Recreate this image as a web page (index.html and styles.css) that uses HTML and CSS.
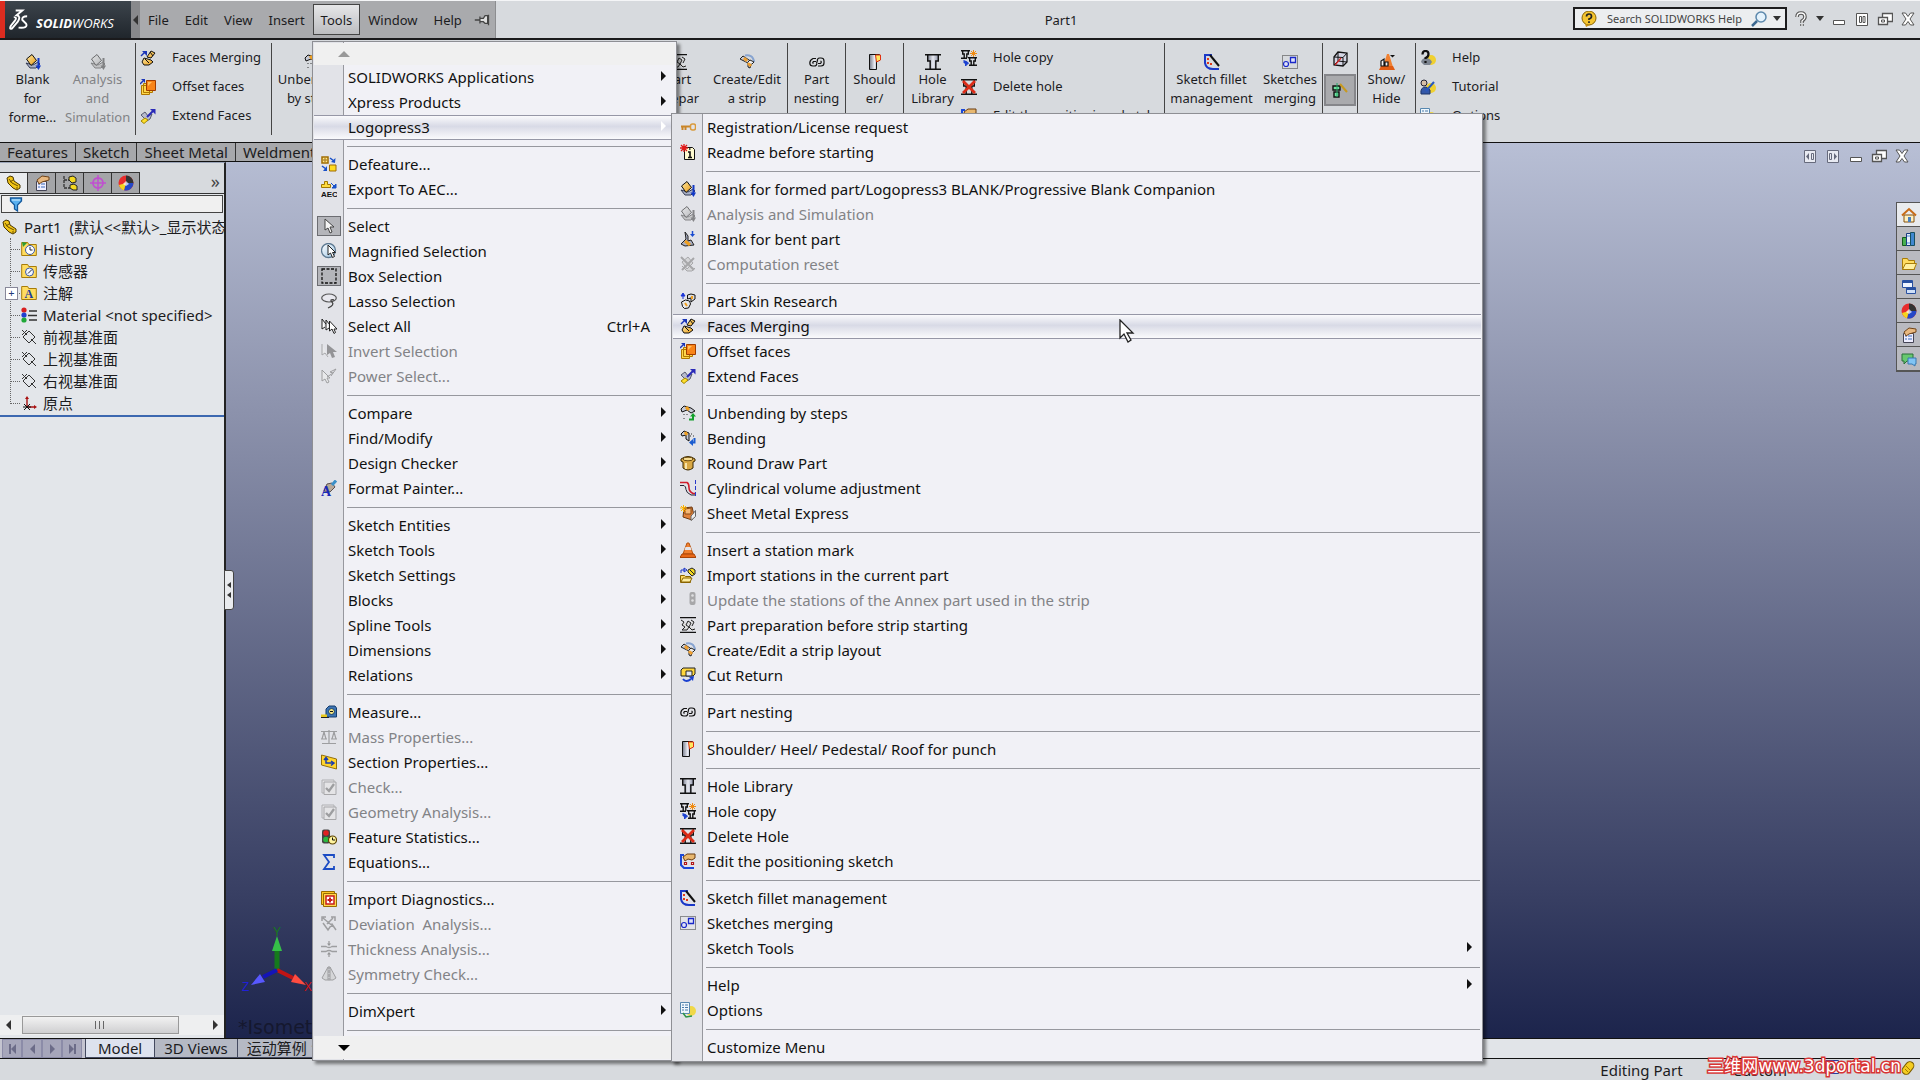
FILE: index.html
```html
<!DOCTYPE html>
<html lang="en">
<head>
<meta charset="utf-8">
<title>SOLIDWORKS - Part1</title>
<link rel="stylesheet" href="styles.css">
</head>
<body>
<svg class="paints" aria-hidden="true">
  <defs>
    <linearGradient id="g-steel" x1="0" x2="1"><stop offset="0" stop-color="#777c8c"/><stop offset=".5" stop-color="#e8eaf2"/><stop offset="1" stop-color="#8a90a4"/></linearGradient>
    <linearGradient id="g-gold" x1="0" x2="1" y2="1"><stop offset="0" stop-color="#ffe9a0"/><stop offset="1" stop-color="#e89a18"/></linearGradient>
    <linearGradient id="g-lens" x1="0" x2="1" y2="1"><stop offset="0" stop-color="#ffffff"/><stop offset="1" stop-color="#9cc4e4"/></linearGradient>
  </defs>
</svg>
<svg class="sprite" aria-hidden="true">
  <symbol id="i-blank" viewBox="0 0 16 16"><path d="M1 9 5 14h6l4-4-2-2-5 3z" fill="#a9b1c8" stroke="#333a55"/><path d="M1.500 5 7 .5l4.500 6-5.500 5z" fill="url(#g-gold)" stroke="#111"/><path d="M13.500 4v9" stroke="#1238c4" stroke-width="2"/><path d="M10.500 11.500H16L13.500 16z" fill="#1238c4"/></symbol>
  <symbol id="i-merge" viewBox="0 0 16 16"><path d="M7 7 11 1l4 2-4 5z" fill="url(#g-gold)" stroke="#111"/><path d="m2 12 2-4 7 2 2 2-4 3-5 0z" fill="url(#g-gold)" stroke="#111"/><path d="m5 9 4 4M10 2l3 4" stroke="#111"/><path d="M1 6 5 2" stroke="#1a35b8" stroke-width="1.500"/><path d="M2 1h5v5z" fill="#1a35b8"/></symbol>
  <symbol id="i-offset" viewBox="0 0 16 16"><path d="M1.500 6.500h8v9h-8zM3.500 4.500h9v9h-9z" fill="#ffd84c" stroke="#b07800"/><path d="M6.500 1.500h9v10h-9z" fill="#f88418" stroke="#a03c00"/><path d="M8 3h4l-4 4z" fill="#ffc060"/><path d="M0 5 3 2" stroke="#1a35b8" stroke-width="1.500"/><path d="M1 0h4v4z" fill="#1a35b8"/></symbol>
  <symbol id="i-extend" viewBox="0 0 16 16"><path d="m1 7 4-3 3 4 4-2-2 5-3 2z" fill="#b8bccc" stroke="#555a70"/><path d="m1 13 4-3 3 2-4 3.500z" fill="#ffe02c" stroke="#a08400"/><path d="M7 9 13 3" stroke="#2a2ab8" stroke-width="2"/><path d="M10 1h5.500v5.500z" fill="#2a2ab8"/></symbol>
  <symbol id="i-key" viewBox="0 0 16 16"><path d="M1 7.500h9M2.500 8v3M5.500 8v3" stroke="#c98528" stroke-width="2" fill="none"/><rect x="10.500" y="5" width="5" height="6" rx="2" fill="none" stroke="#d99a3c" stroke-width="1.500"/></symbol>
  <symbol id="i-readme" viewBox="0 0 16 16"><path d="M4.500 3.500h8l2 2v10h-10z" fill="#fffbd0" stroke="#111"/><path d="M8 8h2v5M8 13.500h4M9 5h1.500" stroke="#111" stroke-width="1.600" fill="none"/><path d="M0 4h8M4 0v8M1 1l6 6M7 1 1 7" stroke="#e01818" stroke-width="1.300"/></symbol>
  <symbol id="i-bent" viewBox="0 0 16 16"><path d="m5 1 1 7-5 5 4 2 9-1-3-5-3 1V5z" fill="#a8aec4" stroke="#222"/><path d="m5 10 5 4" stroke="#f0a020" stroke-width="3"/><path d="M12.500 0v4" stroke="#1a4bd0" stroke-width="1.500"/><path d="M10 3h5l-2.500 3z" fill="#1a4bd0"/></symbol>
  <symbol id="i-reset" viewBox="0 0 16 16"><path d="m2 6 6-5 5 6-6 6zM2 10l5 5h5l3-3" fill="#ccc" stroke="#777"/><path d="m1 1 13 13M14 2 2 14" stroke="#777" stroke-width="2"/></symbol>
  <symbol id="i-skin" viewBox="0 0 16 16"><path d="M7.500 2 11 1l4 1v4l-4 3V5l-3.500 1z" fill="#ddd" stroke="#111"/><path d="m1.500 9 4-2 4 1 1 3-2 4-4 .5-2-2z" fill="#e8e8e8" stroke="#111"/><path d="m5 10 2 3M12 3v3" stroke="#f0a020" stroke-width="2"/><path d="M3 6V2M1 3h4L3 0z" stroke="#1a35d8" fill="#1a35d8"/></symbol>
  <symbol id="i-unbend" viewBox="0 0 16 16"><path d="m1 4 3-3 7 2 4 3-4 2-4-3-5 2z" fill="#c4c8d4" stroke="#111"/><path d="m6 2 3 3" stroke="#f0a020" stroke-width="3"/><path d="M4 9v1m3-1v1m-3 3v1" stroke="#333"/><path d="M9 14.500h4V11" stroke="#12a02c" stroke-width="2" fill="none"/><path d="M10 11.500h6L13 8z" fill="#12a02c"/></symbol>
  <symbol id="i-bend" viewBox="0 0 16 16"><path d="m1 4 3-3 5 2v8l-3-2V5L2 6z" fill="#c4c8d4" stroke="#111"/><path d="m5 2 2 3" stroke="#f0a020" stroke-width="3"/><path d="M11 4h1m1 2h1m-4 0h1" stroke="#333"/><path d="M14.500 8v4.500H12" stroke="#1a5cd0" stroke-width="2" fill="none"/><path d="M13 9v7l-4-3.500z" fill="#1a5cd0"/></symbol>
  <symbol id="i-round" viewBox="0 0 16 16"><path d="M1 4q7-5 14 0v2l-2 1v6q-5 4-10 0V7L1 6z" fill="#d9a844" stroke="#3a2800"/><ellipse cx="8" cy="4" rx="5" ry="1.800" fill="#f6dc90" stroke="#6b4c10"/><path d="M6 8v6" stroke="#f8e4a8" stroke-width="2"/></symbol>
  <symbol id="i-cyl" viewBox="0 0 16 16"><path d="M0 2.500h7q2 1 2 5t4 6h2" fill="none" stroke="#d01c2c" stroke-width="1.600"/><path d="M0 5.500h4q2 1 2 4t5 5.500h4" fill="none" stroke="#223"/><path d="M15.500 0v16" stroke="#2838c8" stroke-dasharray="4 2"/></symbol>
  <symbol id="i-sme" viewBox="0 0 16 16"><path d="m4 3 8-1 2 8-2 5-9-3z" fill="#e0823c" stroke="#6c3810"/><path d="m5 4 6-1v6H5z" fill="#f4b878" stroke="#8a4a14"/><path d="M11 11v4.500l4.500-4V5.500l-3 4z" fill="#eee" stroke="#666"/><path d="M0 3h7M3.500 0v7M1 1l5 5M6 1 1 6" stroke="#ffb400"/></symbol>
  <symbol id="i-cone" viewBox="0 0 16 16"><path d="M7 1h2l4 11H3z" fill="#f08030" stroke="#b85410"/><path d="m5.500 5-1 3h7l-1-3z" fill="#e4e4e8"/><path d="M0 15.500 2 12h12l2 3.500z" fill="#e86818" stroke="#a84408"/></symbol>
  <symbol id="i-import" viewBox="0 0 16 16"><path d="M.5 15.500v-7h4l1 1h5v6z" fill="#ffd860" stroke="#8a6400"/><path d="m1 15 2-4h9l-2 4z" fill="#ffeea0" stroke="#8a6400"/><path d="m8 3 4-2 3 2v4l-3 2-4-4z" fill="#f4d820" stroke="#222"/><path d="m10 3 4 4" stroke="#222"/><path d="M1 6V3h4M4 1l3 2-3 2z" stroke="#1a35c8" fill="none"/></symbol>
  <symbol id="i-update" viewBox="0 0 16 16"><rect x="9.500" y="0" width="6" height="13" rx="2" fill="#777"/><circle cx="12.500" cy="3.500" r="1.300" fill="#ddd"/><circle cx="12.500" cy="8.500" r="1.300" fill="#ddd"/></symbol>
  <symbol id="i-prep" viewBox="0 0 16 16"><path d="M0 .5h16M0 15.500h16" stroke="#111" stroke-width="1.500"/><path d="m1 3 3 2-2 3 3 2-3 3h5l2-3-3-2 2-4 3 2-2 4 3 3 3-1M11 3l3 2-2 4" fill="#ddd" stroke="#222"/></symbol>
  <symbol id="i-strip" viewBox="0 0 16 16"><path d="m1 5 3-3 6 4 3 2-2 6-2-1V9L7 8 5 7z" fill="#c8ccd8" stroke="#222"/><path d="m5 4 3 3M9 9l3 3" stroke="#f0a030" stroke-width="3"/><path d="M6 1.500q6-1 8 3l1.500 3.500" fill="none" stroke="#88a4d0" stroke-width="2"/><path d="m9 8 2-2 4 2-2 2" fill="#eee" stroke="#222"/></symbol>
  <symbol id="i-cut" viewBox="0 0 16 16"><path d="m1 3 2-2h12v6l-2 2H1z" fill="#ffd63c" stroke="#222"/><path d="M6 4h6v5H6z" fill="#e4e8f0" stroke="#222"/><path d="M3 12q3 4 8 0" fill="none" stroke="#1a40d0" stroke-width="2"/><path d="m9 10 5-1-1 5z" fill="#1a40d0"/></symbol>
  <symbol id="i-nest" viewBox="0 0 16 16"><path d="M7 4.500H4Q.8 6 .8 9t3 3h1.500q2.500 0 2.500-2.500" fill="none" stroke="#111" stroke-width="1.200"/><path d="M7 7.500H4.500Q3 9 4.500 9.500M9 12h3q3 0 3-3V7q0-3-3-3h-1.500Q8.300 4 8.300 7L7.500 9.500M9 9.500h2.500Q13 7.500 11.500 7" fill="none" stroke="#111" stroke-width="1.200"/></symbol>
  <symbol id="i-shoulder" viewBox="0 0 16 16"><path d="M2.500.5h10v5l-3 2v8h-7z" fill="url(#g-steel)" stroke="#111"/><path d="M8.500 1h5v5l-4 2z" fill="#ffe860" stroke="#e03010"/></symbol>
  <symbol id="i-hole" viewBox="0 0 16 16"><path d="M2.500 1h11v6h-2v8h-7V7h-2z" fill="url(#g-steel)"/><path d="M0 .7h16M0 15.300h16M2.700 1v6h2.500v8M13.300 1v6h-2.500v8" fill="none" stroke="#111" stroke-width="1.400"/></symbol>
  <symbol id="i-holecopy" viewBox="0 0 16 16"><path d="M0 .7h9M0 8.300h6M1.700 1v3h1.500v4M7.300 1v3H5.800v4" fill="none" stroke="#111" stroke-width="1.400"/><path d="M7 7.700h9M8 15.300h8M8.700 8v3h1.500v4M14.300 8v3h-1.500v4" fill="none" stroke="#111" stroke-width="1.400"/><path d="M9 3.500h7M12.500 0v7M10 1l5 5m0-5-5 5" stroke="#f08a10"/><path d="M3 10v3h2M4.500 11l3 2-3 3z" stroke="#1a40d0" fill="#1a40d0"/></symbol>
  <symbol id="i-holedel" viewBox="0 0 16 16"><path d="M0 .7h16M0 15.300h16M2.700 1v6h2.500v8M13.300 1v6h-2.500v8" fill="none" stroke="#111" stroke-width="1.400"/><path d="M2 2 14 14M14 2 2 14" stroke="#dc2c18" stroke-width="2.800"/></symbol>
  <symbol id="i-editsk" viewBox="0 0 16 16"><path d="M4 2H1v10l3 3h10" fill="none" stroke="#1a48d8" stroke-width="2"/><path d="m3 4 4-3h8v4l-3 2-4-1-3 2z" fill="#e8b870" stroke="#6b3c10"/><path d="M4.500 9.500h2v2h-2zm7 0h2v2h-2z" fill="#fff" stroke="#b01818" stroke-width="1.200"/></symbol>
  <symbol id="i-fillet" viewBox="0 0 16 16"><path d="M8 1H1v8q1 6 8 6h6" fill="none" stroke="#1a38c8" stroke-width="2"/><path d="m6 1 9 11" stroke="#111" stroke-width="2"/><path d="M3 5h2M3 9h2M6 10h2" stroke="#e03818" stroke-width="2"/></symbol>
  <symbol id="i-skmerge" viewBox="0 0 16 16"><path d="M.5 1.500h15v13H.5z" fill="none" stroke="#333" stroke-dasharray="1 1"/><path d="M8.500 3.500h5v5h-5z" fill="#dfe2f8" stroke="#1a28c8" stroke-width="1.300"/><circle cx="4" cy="10" r="2.500" fill="#dfe2f8" stroke="#1a28c8" stroke-width="1.200"/></symbol>
  <symbol id="i-options" viewBox="0 0 16 16"><circle cx="11" cy="9" r="5" fill="#f0d848"/><path d="M.5.5h9v11h-9z" fill="#eef6fc" stroke="#5888b0"/><path d="M2 3h2m1 0h3M2 5.500h2m1 0h3M2 8h2m1 0h3" stroke="#4878a8"/><path d="m3 11 3 4 6-1" fill="none" stroke="#2c9444" stroke-width="1.500"/></symbol>
  <symbol id="i-defeature" viewBox="0 0 16 16"><path d="M1 1h6v6H1z" fill="#ffe890" stroke="#a06c00" stroke-width="1.500"/><path d="M3 3h2v2H3z" fill="#fff" stroke="#a06c00"/><path d="M8.500 9h6.500v6H8.500z" fill="#ffdc20" stroke="#a06c00"/><path d="m9 2 4 3M1 10l4 3" stroke="#1850c8" stroke-width="1.500"/><path d="m14.500 2-.5 5-4-1zM6 10v5H2z" fill="#1850c8"/></symbol>
  <symbol id="i-aec" viewBox="0 0 16 16"><path d="M.5 6.500v-3h3v-3h3v3h3v3z" fill="#ffdc40" stroke="#a07800"/><path d="m10 2 3 3M15 3v4h-4z" stroke="#1850c8" fill="#1850c8"/><text x="0" y="15.500" font-family="Liberation Sans, sans-serif" font-size="8" font-weight="bold" fill="#111">AEC</text></symbol>
  <symbol id="i-cursor" viewBox="0 0 16 16"><path d="M4 1v11l3-2 2 5 2-1-2-5h4z" fill="#f4f4f4" stroke="#444"/></symbol>
  <symbol id="i-magsel" viewBox="0 0 16 16"><circle cx="7.500" cy="7.500" r="7" fill="url(#g-lens)" stroke="#5c7890" stroke-width="1.300"/><path d="M7 2v10l2.500-2 2 4.500 2-1-2-4h3z" fill="#fff" stroke="#222"/></symbol>
  <symbol id="i-boxsel" viewBox="0 0 16 16"><path d="M1 1h14v14H1z" fill="none" stroke="#111" stroke-width="1.300" stroke-dasharray="3 1.500"/></symbol>
  <symbol id="i-lasso" viewBox="0 0 16 16"><ellipse cx="8" cy="5" rx="7.300" ry="4" fill="#e8e8ee" stroke="#555" stroke-width="1.200"/><path d="M13 7q-5-1-2 2t-4 6" fill="none" stroke="#444" stroke-width="1.300"/></symbol>
  <symbol id="i-selall" viewBox="0 0 16 16"><path d="M1 1v10l3-2M5 2v10l3-2" fill="#fff" stroke="#222"/><path d="M1 1l4 5m0-4 4 5" stroke="#222"/><path d="M8.500 3v10l2.500-2 2 4.500 1.500-1L13 11h3z" fill="#fff" stroke="#222"/></symbol>
  <symbol id="i-invert" viewBox="0 0 16 16"><path d="M1 1v11l3-2 3 4" fill="#eee" stroke="#777"/><path d="M6 1v11l3-2 2 5 3-1-2-5h4z" fill="#555"/></symbol>
  <symbol id="i-power" viewBox="0 0 16 16"><path d="M1 2v11l3-2 2 4 2-1-2-4h3z" fill="#eee" stroke="#666"/><path d="M10 8 15 1 9 4l3 1-6 4" fill="none" stroke="#666"/></symbol>
  <symbol id="i-painter" viewBox="0 0 16 16"><path d="m6 4 5-1 3 4-5 5-6-1z" fill="#b8a898" stroke="#5a5050"/><path d="m11 5 4-4.500" stroke="#3a90c8" stroke-width="3"/><text x="0" y="16" font-family="Liberation Serif, serif" font-size="14" font-weight="bold" fill="#1a28b8">A</text></symbol>
  <symbol id="i-measure" viewBox="0 0 16 16"><path d="M5 13V5l3-3h6l1.500 2v9z" fill="#3c74b4" stroke="#143c6c"/><circle cx="10.500" cy="7.500" r="3" fill="#f4e480" stroke="#143c6c"/><path d="M9 7.500h3" stroke="#111"/><path d="M0 12h6" stroke="#e8c81c" stroke-width="3"/><path d="M0 13.500h8" stroke="#222"/></symbol>
  <symbol id="i-mass" viewBox="0 0 16 16"><path d="M0 2.500h16M8 1v13M1 14.500h14M0 10h6M10 10h6M3 3l-2 7M3 3l2 7M13 3l-2 7m2-7 2 7" stroke="#666" stroke-width="1.200" fill="none"/></symbol>
  <symbol id="i-section" viewBox="0 0 16 16"><path d="m.5 1 15 4v10L.5 11z" fill="#ffd42c" stroke="#94700c"/><path d="M5 4v5h7M3 6l2-2.500L7 6M10 7l3 2-3 2.500" fill="none" stroke="#1a3cb0" stroke-width="1.500"/></symbol>
  <symbol id="i-check" viewBox="0 0 16 16"><path d="M1 1h12v13H1z" fill="#e6e6ea" stroke="#888"/><path d="M3 3h12v12.500H3z" fill="#e6e6ea" stroke="#777"/><path d="m5 9 3 3 5-7" fill="none" stroke="#666" stroke-width="2.300"/></symbol>
  <symbol id="i-stats" viewBox="0 0 16 16"><rect x="1" y=".5" width="8" height="14" rx="2" fill="#444"/><circle cx="5" cy="4" r="2.800" fill="#e02020"/><circle cx="5" cy="10.500" r="2.800" fill="#2cb840"/><circle cx="11.500" cy="11" r="4" fill="#fff4a0" stroke="#5c4400" stroke-width="1.200"/><path d="M11.500 8.500V11H14" fill="none" stroke="#111"/></symbol>
  <symbol id="i-sigma" viewBox="0 0 16 16"><path d="M13 4V1H3l5 7-5 7h10v-3" fill="none" stroke="#1c4cc4" stroke-width="1.800"/></symbol>
  <symbol id="i-diag" viewBox="0 0 16 16"><path d="M.5.500h13v13H.5z" fill="#ffc824" stroke="#986c00"/><path d="M2.500 2.500h13v13h-13z" fill="#ffd84c" stroke="#986c00"/><path d="M5 5h8v8H5z" fill="#fff" stroke="#c81c1c" stroke-width="1.500"/><path d="M9 6.500v5M6.500 9h5" stroke="#c81c1c" stroke-width="2"/></symbol>
  <symbol id="i-dev" viewBox="0 0 16 16"><path d="m2 2 12 10M12 2 6 8M1 5V1h4M10 1h4v4M2 7l5 7 4-6 4 6" fill="none" stroke="#666" stroke-width="1.500"/></symbol>
  <symbol id="i-thick" viewBox="0 0 16 16"><path d="M0 5.500h5q3 2 6 0h5M0 10.500h5q3-2 6 0h5M8 0v4M8 16v-4" fill="none" stroke="#666" stroke-width="1.300"/><path d="M6 2.500h4L8 5zM6 13.500h4L8 11z" fill="#555"/></symbol>
  <symbol id="i-sym" viewBox="0 0 16 16"><path d="M7 1 1 12l3 2h3zM9 1l6 11-3 2H9z" fill="#ccc" stroke="#666"/><path d="M8 0v16" stroke="#555" stroke-dasharray="3 1"/></symbol>
  <symbol id="i-help" viewBox="0 0 16 16"><circle cx="11" cy="10" r="5" fill="#f0d030"/><path d="M1 12q1-4 5-4t6 4l-2 3H4z" fill="#7c8490"/><path d="M2.500 4.500q0-3.500 3-3.500t3 3-3 4v1M5.500 11v2" fill="none" stroke="#111" stroke-width="2.200"/></symbol>
  <symbol id="i-tutorial" viewBox="0 0 16 16"><circle cx="11" cy="9" r="5" fill="#f0d030"/><circle cx="4" cy="4" r="3" fill="#d8c0a8" stroke="#223"/><path d="M1 15q-1-7 5-7l4 3v4z" fill="#3458a8" stroke="#1c3468"/><path d="M6 12 14 3" stroke="#2858c0" stroke-width="2"/></symbol>
  <symbol id="i-cube" viewBox="0 0 16 16"><path d="m2 6 4-5 9 1v9l-4 4-9-1z" fill="#d4d6e4" stroke="#111" stroke-width="1.300"/><path d="m2 6 9 .5V15m0-8.500L15 2M6 1v9l-4 4m4-4 9 1" fill="none" stroke="#111"/><path d="M3 14 9 7" stroke="#d02828" stroke-width="1.300"/></symbol>
  <symbol id="i-wand" viewBox="0 0 16 16"><path d="M1 4h7v4H1zM2 10h5v5H2z" fill="#70e0a0" stroke="#111" stroke-width="1.400"/><path d="M5 1v14" stroke="#28a868"/><path d="m8 2 7 8" stroke="#c89a20" stroke-width="2"/></symbol>
  <symbol id="i-show" viewBox="0 0 16 16"><path d="M8 0h2l4 13H4z" fill="#f08030"/><path d="M0 16 2 12h12l2 4z" fill="#e05c14"/><path d="M2 12V7l3-2v7zM6 12V8h3v4z" fill="#f2f2f2" stroke="#111" stroke-width="1.200"/><path d="M11 1h5l-2.500 2.500z" fill="#111"/></symbol>
  <symbol id="i-part" viewBox="0 0 16 16"><path d="m1 3 3-2 3 1 1 4 6 4v3l-3 2-4-2-5-5z" fill="#f0c418" stroke="#4a3600"/><path d="m3 4 3 4 6 3M7 5 4 7M11 12v2" fill="none" stroke="#6b5000"/></symbol>
  <symbol id="i-prop" viewBox="0 0 16 16"><path d="M2.500 6.500h10v9h-10z" fill="#eef" stroke="#445"/><path d="M4 9h2m1 0h4M4 12h2m1 0h4" stroke="#3a68b8"/><path d="m3 5 5-4 7 1v3l-7 2-3 2z" fill="#e8b880" stroke="#704418"/></symbol>
  <symbol id="i-config" viewBox="0 0 16 16"><path d="M2 1v12h6M2 5h5" stroke="#333" stroke-width="1.300" fill="none" stroke-dasharray="3 1"/><path d="m7 2 4-1 3 2v4l-4 1-3-3zM8 10l4-1 3 2v4h-4l-3-2z" fill="#f4d820" stroke="#222"/></symbol>
  <symbol id="i-target" viewBox="0 0 16 16"><circle cx="8" cy="8" r="5" fill="none" stroke="#c050d0" stroke-width="1.800"/><path d="M8 0v16M0 8h16" stroke="#c050d0" stroke-width="1.500"/></symbol>
  <symbol id="i-ball" viewBox="0 0 16 16"><circle cx="8" cy="8" r="7.500" fill="#e82c2c"/><path d="M8 8V.5A7.500 7.500 0 0 1 15.500 8z" fill="#333"/><path d="M8 8h7.500A7.500 7.500 0 0 1 6 15.200z" fill="#2448c8"/><path d="M8 8 6 15.200A7.500 7.500 0 0 1 1 10z" fill="#f4d420"/><path d="m8 6 3 3-3 2-3-2z" fill="#fff" opacity=".7"/></symbol>
  <symbol id="i-filter" viewBox="0 0 16 16"><path d="M2.500 2h11v3l-4 4v6l-3-2V9l-4-4z" fill="#58b0f0" stroke="#14589c" stroke-width="1.300"/><path d="M4 4h8" stroke="#d8f0ff"/></symbol>
  <symbol id="i-folder" viewBox="0 0 16 16"><path d="M.7 14.500V1.500h6l1 2h7.600v11z" fill="#ffdc60" stroke="#a87c08"/></symbol>
  <symbol id="i-open" viewBox="0 0 16 16"><path d="M1.500 14.500v-11h5l1 2h6v9z" fill="#ffdc60" stroke="#a87c08"/><path d="m1.500 14.500 3-6h11l-2.500 6z" fill="#fff0a0" stroke="#a87c08"/></symbol>
  <symbol id="i-history" viewBox="0 0 16 16"><use href="#i-folder"/><path d="m1 1 5 1-4 4z" fill="#2c9c34"/><circle cx="9" cy="9" r="4.500" fill="#fff" stroke="#3a58a8"/><path d="M9 6v3h2.500" fill="none" stroke="#223"/></symbol>
  <symbol id="i-sensor" viewBox="0 0 16 16"><use href="#i-folder"/><circle cx="8.500" cy="9" r="4" fill="#f4f8ff" stroke="#3a58a8"/><path d="m7 10.500 4-4" stroke="#223"/></symbol>
  <symbol id="i-annot" viewBox="0 0 16 16"><use href="#i-folder"/><text x="3.500" y="13" font-family="Liberation Serif, serif" font-size="12" font-weight="bold" fill="#1c3c9c">A</text></symbol>
  <symbol id="i-material" viewBox="0 0 16 16"><circle cx="3" cy="3" r="2.600" fill="#d82020"/><circle cx="3" cy="8" r="2.600" fill="#2040d0"/><circle cx="3" cy="13" r="2.600" fill="#20a838"/><path d="M8 4h8M7 8.500h9M8 13h8" stroke="#333" stroke-width="1.500"/></symbol>
  <symbol id="i-plane" viewBox="0 0 16 16"><path d="m8 2 6 6-6 6-6-6zM1 1l5 5M10 10l5 5M1 6l5-5" fill="none" stroke="#333"/></symbol>
  <symbol id="i-origin" viewBox="0 0 16 16"><path d="M6 12V3M6 12h8" stroke="#a81010" stroke-width="1.400"/><path d="M4 4h4L6 1zM13 10v4l3-2z" fill="#a81010"/><path d="m3 9 6 6M9 9l-6 6M2 12h8" stroke="#111"/></symbol>
  <symbol id="i-home" viewBox="0 0 16 16"><path d="M3 8h10v7H3z" fill="#fff0c0" stroke="#84500c"/><path d="M1 8.500 8 2l7 6.500" fill="none" stroke="#c86c18" stroke-width="2"/><path d="M7 10h3v5H7z" fill="#4880c0"/></symbol>
  <symbol id="i-books" viewBox="0 0 16 16"><path d="M1.500 6.500h4v8h-4z" fill="#48b050" stroke="#145c1c"/><path d="M5.500 2.500h4v12h-4z" fill="#e8f0f8" stroke="#183c80"/><path d="M9.500 1.500h4v13h-4z" fill="#4088d0" stroke="#185060"/><path d="M6 5h3M6 12h3" stroke="#4c88dc"/></symbol>
  <symbol id="i-window" viewBox="0 0 16 16"><path d="M1.500 1.500h10v7h-10z" fill="#eef4ff" stroke="#2850a0"/><path d="M5.500 8.500h9v6h-9z" fill="#cfe0f8" stroke="#2850a0"/><path d="M2 3h9M6 10h8" stroke="#2850a0" stroke-width="2"/></symbol>
  <symbol id="i-chat" viewBox="0 0 16 16"><path d="M1 3h11v7H6l-3 3v-3H1z" fill="#68c870" stroke="#287038"/><path d="M7 7h8v6h-1v2l-3-2H7z" fill="#80c4f4" stroke="#3878b0"/></symbol>
  <symbol id="w-min" viewBox="0 0 16 16"><path d="M2.500 9.500h11v4h-11z" fill="#fff" stroke="#555"/></symbol>
  <symbol id="w-tile" viewBox="0 0 16 16"><path d="M2.500 2.500h11v12h-11zM5.500 5.500h2v6h-2zM9 5.500h2v6H9z" fill="#fff" stroke="#555"/></symbol>
  <symbol id="w-left" viewBox="0 0 16 16"><path d="M2.500 2.500h11v12h-11zM9.500 5.500h2v6h-2z" fill="#e8eaf2" stroke="#666a7c"/><path d="M7 5v7L4 8.500z" fill="#666a7c"/></symbol>
  <symbol id="w-right" viewBox="0 0 16 16"><path d="M2.500 2.500h11v12h-11zM4.500 5.500h2v6h-2z" fill="#e8eaf2" stroke="#666a7c"/><path d="M9 5v7l3-3.500z" fill="#666a7c"/></symbol>
  <symbol id="w-rest" viewBox="0 0 16 16"><path d="M5.500 2.500h10v8h-10z" fill="#fff" stroke="#555" stroke-width="1.300"/><path d="M1.500 6.500h9v7h-9z" fill="#fff" stroke="#555" stroke-width="1.300"/><path d="M4.500 9h3v2h-3z" fill="none" stroke="#555"/></symbol>
  <symbol id="w-close" viewBox="0 0 16 16"><path d="M2 2h3.500L8 5.500 10.500 2H14l-4 6 4 6h-3.500L8 10.500 5.500 14H2l4-6z" fill="#fff" stroke="#555"/></symbol>
</svg>

<header class="titlebar">
  <div class="brand">
    <svg class="brand-mark" viewBox="0 0 22 24"><path d="M7 2h7l-6 5q5 1 1 7l-6 7q-3 1-1-3l4-5q3-4-1-4M19 8q-6 0-5 4l4 4q2 5-8 4" fill="none" stroke="#fff" stroke-width="2"/></svg>
    <span class="brand-name"><b>SOLID</b>WORKS</span>
  </div>
  <button class="collapse" aria-label="Collapse menu"></button>
  <nav class="menubar">
    <button>File</button><button>Edit</button><button>View</button><button>Insert</button><button class="open">Tools</button><button>Window</button><button>Help</button>
    <button class="pin" aria-label="Pin menu"><svg viewBox="0 0 18 14"><path d="M0 7h6M6 3v8M16 1v12M6 5h4l2-3h3v9h-3l-2-2H6" fill="#ddd" stroke="#444" stroke-width="1.500"/></svg></button>
  </nav>
  <h1 class="doc-title">Part1</h1>
  <div class="title-tools">
    <label class="search"><svg class="ic" viewBox="0 0 16 16"><circle cx="8" cy="7" r="7" fill="#f4c430" stroke="#8a6400"/><path d="m4 13 1 3 4-2z" fill="#c89010"/><path d="M5.500 5.500q0-2.500 2.500-2.500t2.500 2.200-2.500 2.800v1M8 10.200v1.800" fill="none" stroke="#222" stroke-width="1.700"/></svg><input type="text" aria-label="Search" placeholder="Search SOLIDWORKS Help"><svg class="ic" viewBox="0 0 16 16"><circle cx="10" cy="6" r="5" fill="#e4f2fc" stroke="#5c88ac" stroke-width="1.500"/><path d="m6 10-5 5" stroke="#3c6890" stroke-width="2.500"/></svg><i class="caret"></i></label>
    <button class="win" aria-label="Help"><svg class="ic" viewBox="0 0 16 16"><path d="M4 6q0-4 4-4t4 4q0 2-3 4v2M9 13v2" fill="none" stroke="#555" stroke-width="3.500"/><path d="M4 6q0-4 4-4t4 4q0 2-3 4v2M9 13v2" fill="none" stroke="#fff" stroke-width="1.300"/></svg></button>
    <i class="caret"></i>
    <button class="win" aria-label="Minimize"><svg class="ic"><use href="#w-min"/></svg></button>
    <button class="win" aria-label="Tile"><svg class="ic"><use href="#w-tile"/></svg></button>
    <button class="win" aria-label="Restore"><svg class="ic"><use href="#w-rest"/></svg></button>
    <button class="win" aria-label="Close"><svg class="ic"><use href="#w-close"/></svg></button>
  </div>
</header>

<section class="ribbon" aria-label="CommandManager">
  <div class="group g-blank">
    <button class="big"><svg class="ic"><use href="#i-blank"/></svg>Blank<br>for<br>forme...</button>
    <button class="big" disabled><svg class="ic"><use href="#i-blank"/></svg>Analysis<br>and<br>Simulation</button>
  </div>
  <div class="group g-faces">
    <div class="stack">
      <button class="small"><svg class="ic"><use href="#i-merge"/></svg>Faces Merging</button>
      <button class="small"><svg class="ic"><use href="#i-offset"/></svg>Offset faces</button>
      <button class="small"><svg class="ic"><use href="#i-extend"/></svg>Extend Faces</button>
    </div>
  </div>
  <div class="group g-strip">
    <button class="big wide"><svg class="ic"><use href="#i-unbend"/></svg>Unbending<br>by steps</button>
    <span class="space"></span>
    <button class="big"><svg class="ic"><use href="#i-prep"/></svg>Part<br>prepar</button>
    <button class="big wide"><svg class="ic"><use href="#i-strip"/></svg>Create/Edit<br>a strip</button>
  </div>
  <div class="group g-one"><button class="big"><svg class="ic"><use href="#i-nest"/></svg>Part<br>nesting</button></div>
  <div class="group g-one"><button class="big"><svg class="ic"><use href="#i-shoulder"/></svg>Should<br>er/</button></div>
  <div class="group g-hole">
    <button class="big"><svg class="ic"><use href="#i-hole"/></svg>Hole<br>Library</button>
    <div class="stack">
      <button class="small"><svg class="ic"><use href="#i-holecopy"/></svg>Hole copy</button>
      <button class="small"><svg class="ic"><use href="#i-holedel"/></svg>Delete hole</button>
      <button class="small"><svg class="ic"><use href="#i-editsk"/></svg>Edit the positioning sketch</button>
    </div>
  </div>
  <div class="group g-sketch">
    <button class="big wider"><svg class="ic"><use href="#i-fillet"/></svg>Sketch fillet<br>management</button>
    <button class="big"><svg class="ic"><use href="#i-skmerge"/></svg>Sketches<br>merging</button>
  </div>
  <div class="group g-toggle">
    <button class="toggle" aria-label="Cube"><svg class="ic"><use href="#i-cube"/></svg></button>
    <button class="toggle on" aria-label="Wand"><svg class="ic"><use href="#i-wand"/></svg></button>
  </div>
  <div class="group g-one"><button class="big"><svg class="ic"><use href="#i-show"/></svg>Show/<br>Hide</button></div>
  <div class="group g-help">
    <div class="stack">
      <button class="small"><svg class="ic"><use href="#i-help"/></svg>Help</button>
      <button class="small"><svg class="ic"><use href="#i-tutorial"/></svg>Tutorial</button>
      <button class="small"><svg class="ic"><use href="#i-options"/></svg>Options</button>
    </div>
  </div>
</section>

<main class="work">
  <nav class="cm-tabs"><button>Features</button><button>Sketch</button><button>Sheet Metal</button><button>Weldments</button></nav>
  <div class="doc-buttons">
    <button class="win" aria-label="Show left"><svg class="ic"><use href="#w-left"/></svg></button>
    <button class="win" aria-label="Show right"><svg class="ic"><use href="#w-right"/></svg></button>
    <button class="win" aria-label="Minimize document"><svg class="ic"><use href="#w-min"/></svg></button>
    <button class="win" aria-label="Restore document"><svg class="ic"><use href="#w-rest"/></svg></button>
    <button class="win" aria-label="Close document"><svg class="ic"><use href="#w-close"/></svg></button>
  </div>
  <aside class="panel">
    <div class="panel-tabs">
      <button class="on" aria-label="FeatureManager"><svg class="ic"><use href="#i-part"/></svg></button>
      <button aria-label="PropertyManager"><svg class="ic"><use href="#i-prop"/></svg></button>
      <button aria-label="ConfigurationManager"><svg class="ic"><use href="#i-config"/></svg></button>
      <button aria-label="DimXpertManager"><svg class="ic"><use href="#i-target"/></svg></button>
      <button aria-label="DisplayManager"><svg class="ic"><use href="#i-ball"/></svg></button>
      <span class="more">»</span>
    </div>
    <label class="filter"><svg class="ic"><use href="#i-filter"/></svg><input type="text" aria-label="Filter"></label>
    <div class="tree">
      <div class="root"><svg class="ic"><use href="#i-part"/></svg>Part1&nbsp; (默认&lt;&lt;默认&gt;_显示状态 1&gt;)</div>
      <ul>
        <li><svg class="ic"><use href="#i-history"/></svg>History</li>
        <li><svg class="ic"><use href="#i-sensor"/></svg>传感器</li>
        <li class="plus"><svg class="ic"><use href="#i-annot"/></svg>注解</li>
        <li><svg class="ic"><use href="#i-material"/></svg>Material &lt;not specified&gt;</li>
        <li><svg class="ic"><use href="#i-plane"/></svg>前视基准面</li>
        <li><svg class="ic"><use href="#i-plane"/></svg>上视基准面</li>
        <li><svg class="ic"><use href="#i-plane"/></svg>右视基准面</li>
        <li><svg class="ic"><use href="#i-origin"/></svg>原点</li>
      </ul>
    </div>
    <div class="hscroll"><i class="tri-l"></i><span class="thumb"></span><i class="tri-r"></i></div>
    <span class="handle"><i class="tri-l"></i><i class="tri-l"></i></span>
  </aside>
  <section class="viewport">
    <svg class="triad" viewBox="0 0 72 70"><path d="M36 44V24" stroke="#157a1c" stroke-width="5"/><path d="M31 25h10l-5-15z" fill="#35c048"/><path d="m36 44 16 8" stroke="#c01414" stroke-width="4"/><path d="m50 56 4-8 11 11z" fill="#ff4c40"/><path d="m36 44-14 7" stroke="#1414b8" stroke-width="4"/><path d="m24 56-5-8-9 11z" fill="#5858ff"/><g font-family="Liberation Sans, sans-serif" font-size="12"><text x="32" y="10" fill="#157a1c">Y</text><text x="63" y="65" fill="#d01414">X</text><text x="1" y="65" fill="#2020d8">Z</text></g></svg>
    <span class="view-name">*Isometric</span>
    <nav class="taskpane">
      <button aria-label="Resources"><svg class="ic"><use href="#i-home"/></svg></button>
      <button aria-label="Design Library"><svg class="ic"><use href="#i-books"/></svg></button>
      <button aria-label="File Explorer"><svg class="ic"><use href="#i-open"/></svg></button>
      <button aria-label="View Palette"><svg class="ic"><use href="#i-window"/></svg></button>
      <button aria-label="Appearances"><svg class="ic"><use href="#i-ball"/></svg></button>
      <button aria-label="Custom Properties"><svg class="ic"><use href="#i-prop"/></svg></button>
      <button aria-label="Forum"><svg class="ic"><use href="#i-chat"/></svg></button>
    </nav>
  </section>
</main>

<nav class="sheet-tabs">
  <span class="nav-btns"><button disabled aria-label="First"><i class="bar"></i><i class="tri-l"></i></button><button disabled aria-label="Previous"><i class="tri-l"></i></button><button disabled aria-label="Next"><i class="tri-r"></i></button><button disabled aria-label="Last"><i class="tri-r"></i><i class="bar"></i></button></span>
  <button class="sheet on">Model</button><button class="sheet">3D Views</button><button class="sheet">运动算例 1</button>
</nav>
<footer class="status"><span class="st-edit">Editing Part</span><span class="st-custom">Custom</span><svg class="ic" viewBox="0 0 16 16"><path d="M1.500 1.500h13v13h-13z" fill="#dfe8f8" stroke="#2840a0"/><path d="m4 10 4-4 4 4z" fill="#386850"/></svg></footer>
<div class="watermark">三维网www.3dportal.cn</div>
<svg class="tag" viewBox="0 0 14 16"><rect x="3" y="1" width="8" height="14" rx="4" transform="rotate(38 7 8)" fill="#f4cc20" stroke="#7c5c00"/><path d="m5 6 4 4M4 9l3 3" stroke="#a87c00"/></svg>

<ul class="menu tools-menu">
  <li class="scroll-up"><i class="tri-u"></i></li>
  <li><button class="item"><i class="ic"></i>SOLIDWORKS Applications<i class="sub"></i></button></li>
  <li><button class="item"><i class="ic"></i>Xpress Products<i class="sub"></i></button></li>
  <li><button class="item hot"><i class="ic"></i>Logopress3<i class="sub"></i></button></li>
  <li class="sep"></li>
  <li><button class="item"><svg class="ic"><use href="#i-defeature"/></svg>Defeature...</button></li>
  <li><button class="item"><svg class="ic"><use href="#i-aec"/></svg>Export To AEC...</button></li>
  <li class="sep"></li>
  <li><button class="item"><svg class="ic on"><use href="#i-cursor"/></svg>Select</button></li>
  <li><button class="item"><svg class="ic"><use href="#i-magsel"/></svg>Magnified Selection</button></li>
  <li><button class="item"><svg class="ic on"><use href="#i-boxsel"/></svg>Box Selection</button></li>
  <li><button class="item"><svg class="ic"><use href="#i-lasso"/></svg>Lasso Selection</button></li>
  <li><button class="item"><svg class="ic"><use href="#i-selall"/></svg>Select All<kbd>Ctrl+A</kbd></button></li>
  <li><button class="item" disabled><svg class="ic"><use href="#i-invert"/></svg>Invert Selection</button></li>
  <li><button class="item" disabled><svg class="ic"><use href="#i-power"/></svg>Power Select...</button></li>
  <li class="sep"></li>
  <li><button class="item"><i class="ic"></i>Compare<i class="sub"></i></button></li>
  <li><button class="item"><i class="ic"></i>Find/Modify<i class="sub"></i></button></li>
  <li><button class="item"><i class="ic"></i>Design Checker<i class="sub"></i></button></li>
  <li><button class="item"><svg class="ic"><use href="#i-painter"/></svg>Format Painter...</button></li>
  <li class="sep"></li>
  <li><button class="item"><i class="ic"></i>Sketch Entities<i class="sub"></i></button></li>
  <li><button class="item"><i class="ic"></i>Sketch Tools<i class="sub"></i></button></li>
  <li><button class="item"><i class="ic"></i>Sketch Settings<i class="sub"></i></button></li>
  <li><button class="item"><i class="ic"></i>Blocks<i class="sub"></i></button></li>
  <li><button class="item"><i class="ic"></i>Spline Tools<i class="sub"></i></button></li>
  <li><button class="item"><i class="ic"></i>Dimensions<i class="sub"></i></button></li>
  <li><button class="item"><i class="ic"></i>Relations<i class="sub"></i></button></li>
  <li class="sep"></li>
  <li><button class="item"><svg class="ic"><use href="#i-measure"/></svg>Measure...</button></li>
  <li><button class="item" disabled><svg class="ic"><use href="#i-mass"/></svg>Mass Properties...</button></li>
  <li><button class="item"><svg class="ic"><use href="#i-section"/></svg>Section Properties...</button></li>
  <li><button class="item" disabled><svg class="ic"><use href="#i-check"/></svg>Check...</button></li>
  <li><button class="item" disabled><svg class="ic"><use href="#i-check"/></svg>Geometry Analysis...</button></li>
  <li><button class="item"><svg class="ic"><use href="#i-stats"/></svg>Feature Statistics...</button></li>
  <li><button class="item"><svg class="ic"><use href="#i-sigma"/></svg>Equations...</button></li>
  <li class="sep"></li>
  <li><button class="item"><svg class="ic"><use href="#i-diag"/></svg>Import Diagnostics...</button></li>
  <li><button class="item" disabled><svg class="ic"><use href="#i-dev"/></svg>Deviation&nbsp; Analysis...</button></li>
  <li><button class="item" disabled><svg class="ic"><use href="#i-thick"/></svg>Thickness Analysis...</button></li>
  <li><button class="item" disabled><svg class="ic"><use href="#i-sym"/></svg>Symmetry Check...</button></li>
  <li class="sep"></li>
  <li><button class="item"><i class="ic"></i>DimXpert<i class="sub"></i></button></li>
  <li class="sep"></li>
  <li class="scroll-down"><i class="tri-d"></i></li>
</ul>

<ul class="menu sub-menu">
  <li><button class="item"><svg class="ic"><use href="#i-key"/></svg>Registration/License request</button></li>
  <li><button class="item"><svg class="ic"><use href="#i-readme"/></svg>Readme before starting</button></li>
  <li class="sep"></li>
  <li><button class="item"><svg class="ic"><use href="#i-blank"/></svg>Blank for formed part/Logopress3 BLANK/Progressive Blank Companion</button></li>
  <li><button class="item" disabled><svg class="ic"><use href="#i-blank"/></svg>Analysis and Simulation</button></li>
  <li><button class="item"><svg class="ic"><use href="#i-bent"/></svg>Blank for bent part</button></li>
  <li><button class="item" disabled><svg class="ic"><use href="#i-reset"/></svg>Computation reset</button></li>
  <li class="sep"></li>
  <li><button class="item"><svg class="ic"><use href="#i-skin"/></svg>Part Skin Research</button></li>
  <li><button class="item hot"><svg class="ic"><use href="#i-merge"/></svg>Faces Merging</button></li>
  <li><button class="item"><svg class="ic"><use href="#i-offset"/></svg>Offset faces</button></li>
  <li><button class="item"><svg class="ic"><use href="#i-extend"/></svg>Extend Faces</button></li>
  <li class="sep"></li>
  <li><button class="item"><svg class="ic"><use href="#i-unbend"/></svg>Unbending by steps</button></li>
  <li><button class="item"><svg class="ic"><use href="#i-bend"/></svg>Bending</button></li>
  <li><button class="item"><svg class="ic"><use href="#i-round"/></svg>Round Draw Part</button></li>
  <li><button class="item"><svg class="ic"><use href="#i-cyl"/></svg>Cylindrical volume adjustment</button></li>
  <li><button class="item"><svg class="ic"><use href="#i-sme"/></svg>Sheet Metal Express</button></li>
  <li class="sep"></li>
  <li><button class="item"><svg class="ic"><use href="#i-cone"/></svg>Insert a station mark</button></li>
  <li><button class="item"><svg class="ic"><use href="#i-import"/></svg>Import stations in the current part</button></li>
  <li><button class="item" disabled><svg class="ic"><use href="#i-update"/></svg>Update the stations of the Annex part used in the strip</button></li>
  <li><button class="item"><svg class="ic"><use href="#i-prep"/></svg>Part preparation before strip starting</button></li>
  <li><button class="item"><svg class="ic"><use href="#i-strip"/></svg>Create/Edit a strip layout</button></li>
  <li><button class="item"><svg class="ic"><use href="#i-cut"/></svg>Cut Return</button></li>
  <li class="sep"></li>
  <li><button class="item"><svg class="ic"><use href="#i-nest"/></svg>Part nesting</button></li>
  <li class="sep"></li>
  <li><button class="item"><svg class="ic"><use href="#i-shoulder"/></svg>Shoulder/ Heel/ Pedestal/ Roof for punch</button></li>
  <li class="sep"></li>
  <li><button class="item"><svg class="ic"><use href="#i-hole"/></svg>Hole Library</button></li>
  <li><button class="item"><svg class="ic"><use href="#i-holecopy"/></svg>Hole copy</button></li>
  <li><button class="item"><svg class="ic"><use href="#i-holedel"/></svg>Delete Hole</button></li>
  <li><button class="item"><svg class="ic"><use href="#i-editsk"/></svg>Edit the positioning sketch</button></li>
  <li class="sep"></li>
  <li><button class="item"><svg class="ic"><use href="#i-fillet"/></svg>Sketch fillet management</button></li>
  <li><button class="item"><svg class="ic"><use href="#i-skmerge"/></svg>Sketches merging</button></li>
  <li><button class="item"><i class="ic"></i>Sketch Tools<i class="sub"></i></button></li>
  <li class="sep"></li>
  <li><button class="item"><i class="ic"></i>Help<i class="sub"></i></button></li>
  <li><button class="item"><svg class="ic"><use href="#i-options"/></svg>Options</button></li>
  <li class="sep"></li>
  <li><button class="item"><i class="ic"></i>Customize Menu</button></li>
</ul>
<svg class="pointer" viewBox="0 0 16 24"><path d="M1 1v18l4-4 4 8 3-2-4-7h6z" fill="#fff" stroke="#222" stroke-width="1.300"/></svg>
</body>
</html>
```
FILE: styles.css
```css
* { box-sizing: border-box; }
body {
  margin: 0;
  height: 100vh;
  display: flex;
  flex-direction: column;
  position: relative;
  overflow: hidden;
  background: #d7dade;
  color: #1c1c1e;
  font: 15px/20px "Noto Sans", "Noto Sans CJK SC", sans-serif;
}
button, input { font: inherit; color: inherit; }
button { border: 0; padding: 0; background: none; white-space: nowrap; }
ul { list-style: none; margin: 0; padding: 0; }
.paints { position: absolute; width: 0; height: 0; }
.sprite { display: none; }
.ic { display: block; width: 16px; height: 16px; flex: none; }
.caret { border: 4px solid transparent; border-top: 5px solid #333; border-bottom: 0; }
.tri-l, .tri-r { border: 5px solid transparent; }
.tri-l { border-right-color: #333; border-left: 0; }
.tri-r { border-left-color: #333; border-right: 0; }

/* title bar */
.titlebar {
  display: flex;
  flex: none;
  height: 40px;
  border-top: 1px solid #f4f5f7;
  border-bottom: 2px solid #1a1a1c;
  font-size: 13px;
  position: relative;
}
.brand {
  display: flex;
  align-items: center;
  gap: 6px;
  width: 131px;
  padding-left: 4px;
  border-left: 5px solid #dc2c20;
  background: linear-gradient(#3c444c, #20262c);
  color: #fff;
}
.brand-mark { width: 21px; height: 26px; flex: none; }
.brand-name { font: italic 13px/20px "Open Sans", sans-serif; padding-top: 6px; }
.collapse { width: 9px; background: #88898c; }
.collapse::after { content: ""; display: block; margin: 0 2px; border: 5px solid transparent; border-right-color: #333; border-left: 0; width: 0; }
.menubar { display: flex; align-items: center; width: 356px; background: #a9aaad; border-right: 1px solid #8c8d90; }
.menubar button { padding: 0 8px; height: 31px; }
.menubar .open { border: 1px solid #444; padding: 0 7px; background: linear-gradient(#e6e6e8, #bcbdc0); }
.menubar .pin { padding: 0 4px; }
.pin svg { width: 17px; height: 12px; display: block; }
.doc-title { position: absolute; left: 0; right: 0; top: 9px; margin: 0 0 0 202px; text-align: center; font-size: 13px; font-weight: 400; }
.title-tools { display: flex; align-items: center; gap: 7px; margin-left: auto; padding: 0 4px 2px 0; position: relative; }
.search { display: flex; align-items: center; gap: 6px; width: 214px; height: 23px; padding: 0 4px 0 6px; margin-right: -1px; border: 2px solid #1c1c1e; background: #eceef0; }
.search input { flex: 1; min-width: 0; padding: 0 0 0 4px; border: 0; background: none; font-size: 11px; }
.search input::placeholder { color: #444; opacity: 1; }
.win { width: 16px; height: 16px; }

/* ribbon */
.ribbon { display: flex; flex: none; height: 103px; padding-top: 3px; border-bottom: 1px solid #111; font-size: 13px; line-height: 19px; background: #d7dade; }
.group { display: flex; height: 92px; border-right: 1px solid #444; flex: none; }
.g-blank { width: 136px; }
.g-faces { width: 136px; padding-left: 4px; }
.g-strip { width: 516px; }
.g-one { width: 58px; }
.g-hole { width: 261px; }
.g-sketch { width: 158px; }
.g-toggle { width: 35px; flex-direction: column; align-items: center; padding-top: 1px; }
.g-help { border: 0; padding-left: 4px; }
.space { flex: 1; }
.big { flex: none; width: 57px; padding-top: 11px; align-self: flex-start; text-align: center; }
.big .ic { margin: 0 auto; }
.g-blank .big { width: 65px; }
.big.wide { width: 80px; }
.big.wider { width: 93px; }
.g-sketch .big:last-child { width: 64px; }
.stack { display: flex; flex-direction: column; overflow: hidden; }
.small { display: flex; align-items: center; gap: 16px; height: 29px; text-align: left; }
button:disabled { color: #828386; }
button:disabled .ic { filter: grayscale(1); opacity: .55; }
.toggle { display: grid; place-items: center; width: 32px; height: 30px; }
.toggle.on { height: 32px; background: #a9aaad; border: 2px solid #85868a; }

/* work area */
.work {
  flex: 1;
  min-height: 0;
  display: grid;
  grid-template: 19px 1fr / 226px 1fr;
  background: linear-gradient(#b8bfd5, #8c92ac 30%, #383f63 84%, #1c244c);
  border-bottom: 1px solid #111;
}
.cm-tabs { grid-column: 1 / 3; grid-row: 1; justify-self: start; display: flex; background: #a7a8ab; border-bottom: 1px solid #111; line-height: 18px; }
.cm-tabs button { padding: 0 7px; border-right: 1px solid #333; }
.doc-buttons { grid-column: 2; grid-row: 1; justify-self: end; display: flex; gap: 7px; padding: 5px 10px 0 0; height: 26px; }
.panel { grid-column: 1; grid-row: 2; min-height: 0; display: flex; flex-direction: column; position: relative; z-index: 1; background: #e3e6ea; border-right: 2px solid #222; border-top: 1px solid #9aa4b8; }
.panel-tabs { display: flex; flex: none; height: 31px; padding-top: 9px; background: #d7dade; border-bottom: 1px solid #333; }
.panel-tabs button { display: grid; place-items: center; width: 28px; background: #a4a5a8; border: 1px solid #333; border-width: 1px 1px 0 0; }
.panel-tabs .on { background: #e9ebee; }
.more { margin-left: auto; padding-right: 4px; font-size: 18px; line-height: 18px; color: #444; }
.filter { display: flex; flex: none; align-items: center; height: 18px; margin: 1px 1px 0; padding-left: 6px; background: #f0f0f0; border: 1px solid #444; }
.filter input { flex: 1; min-width: 0; height: 14px; border: 0; background: none; }
.tree { padding: 3px 0 1px; line-height: 22px; border-bottom: 2px solid #3c68b0; white-space: nowrap; overflow: hidden; flex: none; }
.root { display: flex; align-items: center; gap: 6px; height: 22px; padding-left: 2px; }
.tree ul { position: relative; }
.tree ul::before { content: ""; position: absolute; left: 10px; top: 0; height: 166px; border-left: 1px dotted #666; }
.tree li { display: flex; align-items: center; gap: 6px; height: 22px; padding-left: 21px; position: relative; }
.tree li::before { content: ""; position: absolute; left: 11px; width: 9px; border-top: 1px dotted #666; }
.tree .plus::after { content: "+"; position: absolute; left: 5px; width: 11px; height: 11px; border: 1px solid #889; background: #fff; color: #223a78; font-size: 11px; line-height: 9px; text-align: center; }
.hscroll { display: flex; flex: none; align-items: center; height: 20px; margin-top: auto; margin-bottom: 3px; padding: 0 6px; background: #eeeff0; justify-content: space-between; }
.thumb { width: 157px; height: 18px; margin-right: 24px; background: repeating-linear-gradient(90deg, #666 0 1px, transparent 1px 4px) center / 10px 8px no-repeat, linear-gradient(#f2f2f2, #cfcfd1); border: 1px solid #999; }
.handle { position: absolute; left: 224px; top: 407px; width: 10px; height: 40px; display: flex; flex-direction: column; align-items: center; justify-content: center; gap: 4px; background: #e9ebee; border: 1px solid #444; border-radius: 0 3px 3px 0; }
.handle .tri-l { border-width: 3px 4px 3px 0; }
.viewport { grid-column: 2; grid-row: 2; position: relative; }
.triad { position: absolute; left: 15px; bottom: 42px; width: 72px; height: 70px; }
.view-name { position: absolute; left: 12px; bottom: 0; font: 19px/22px "DejaVu Sans", sans-serif; color: #15182e; }
.taskpane { position: absolute; right: 0; top: 40px; width: 24px; background: #b9bac0; border: 1px solid #555; border-right: 0; }
.taskpane button { display: grid; place-items: center; width: 23px; height: 24px; border-bottom: 1px solid #555; }
.taskpane button:first-child { background: #e9ebee; }

/* model tabs and status */
.sheet-tabs { display: flex; flex: none; height: 20px; background: #e1e4e8; border-bottom: 1px solid #111; line-height: 18px; }
.nav-btns { display: flex; padding-left: 2px; width: 85px; background: #c4c4d0; }
.nav-btns button { display: flex; align-items: center; justify-content: center; width: 20px; border: 1px solid #8c8ca8; background: #a6a6ba; }
.nav-btns .tri-l { border-right-color: #6c6c88; }
.nav-btns .tri-r { border-left-color: #6c6c88; }
.bar { width: 2px; height: 10px; background: #6c6c88; }
.sheet { padding: 0 9px; background: #b5b9c4; border: 1px solid #444a60; border-width: 0 1px 1px 0; }
.sheet.on { padding: 0 12px; background: #dde2ee; border-left-width: 1px; }
.status { display: flex; flex: none; height: 21px; padding-right: 80px; justify-content: flex-end; line-height: 22px; overflow: hidden; }
.st-edit { margin-right: 50px; }
.st-custom { margin-right: 37px; }
.watermark { position: absolute; right: 19px; bottom: 2px; font: 17px/24px "DejaVu Sans", "Noto Sans CJK SC", sans-serif; color: #fff; -webkit-text-stroke: 3px #d83434; paint-order: stroke fill; }
.tag { position: absolute; right: 5px; bottom: 4px; width: 14px; height: 16px; }

/* menus */
.menu {
  position: absolute;
  z-index: 2;
  border: 1px solid #8e8f94;
  padding: 1px;
  color: #111;
  background: linear-gradient(90deg, #e2e3e8 30px, #97989e 30px 31px, #f1f1f6 31px);
  box-shadow: 3px 3px 3px rgba(0, 0, 0, .45);
}
.tools-menu { left: 312px; top: 41px; width: 365px; }
.sub-menu { left: 671px; top: 113px; width: 812px; }
.item { display: flex; align-items: center; gap: 11px; width: 100%; height: 25px; padding: 0 9px 1px 7px; text-align: left; }
.item kbd { font: inherit; margin-left: auto; padding-right: 16px; }
.sub { margin-left: auto; border: 5px solid transparent; border-left-color: #111; border-right: 0; margin-bottom: 3px; }
.item .on { width: 24px; height: 20px; margin: 0 -4px; padding: 1px 3px; background: #b4b5ba; border: 1px solid #6c6d72; }
.hot { background: linear-gradient(#fafafc, #d8dae6 45%, #e2e3ec 60%, #fafafc); border: 1px solid #9697a6; border-width: 1px 0; padding-top: 0; }
.hot .sub { border-left-color: #fff; }
.sep { height: 12px; padding: 6px 1px 0 33px; }
.sep::before { content: ""; display: block; border-top: 1px solid #97989e; }
.scroll-up, .scroll-down { background: #f0f0f0; display: flex; align-items: center; padding-left: 24px; }
.scroll-up { height: 22px; }
.scroll-down { height: 23px; }
.tri-u { border: 6px solid transparent; border-bottom-color: #999; border-top: 0; }
.tri-d { border: 6px solid transparent; border-top-color: #000; border-bottom: 0; }
.pointer { position: absolute; z-index: 3; left: 1119px; top: 319px; width: 16px; height: 24px; }
```
